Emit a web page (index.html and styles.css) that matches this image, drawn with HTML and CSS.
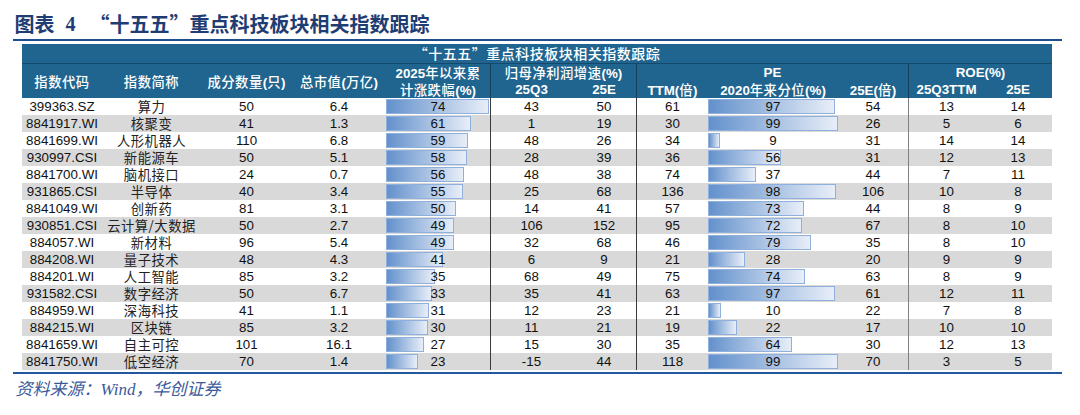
FILE: index.html
```html
<!DOCTYPE html>
<html lang="zh-CN">
<head>
<meta charset="utf-8">
<title>十五五重点科技板块相关指数跟踪</title>
<link rel="stylesheet" href="styles.css">
</head>
<body>
<div class="page">
  <div class="title"><span class="t-cn">图表</span><span class="t-num">4</span><span class="t-text">“十五五”重点科技板块相关指数跟踪</span></div>
  <div class="tbl">
    <div class="h1">“十五五”重点科技板块相关指数跟踪</div>
    <div class="h2">
      <div class="hc span2 c1"><span class="k">指数代码</span></div>
      <div class="hc span2 c2"><span class="k">指数简称</span></div>
      <div class="hc span2 c3"><span class="k">成分数量</span>(<span class="k">只</span>)</div>
      <div class="hc span2 c4"><span class="k">总市值</span>(<span class="k">万亿</span>)</div>
      <div class="hc ra c5">2025<span class="k">年以来累</span></div>
      <div class="hc ra g6 sep"><span class="k">归母净利润增速</span>(%)</div>
      <div class="hc ra g8 sep">PE</div>
      <div class="hc ra g11 sep2">ROE(%)</div>
      <div class="hc rb c5"><span class="k">计涨跌幅</span>(%)</div>
      <div class="hc rb c6 sep">25Q3</div>
      <div class="hc rb c7">25E</div>
      <div class="hc rb c8 sep">TTM(<span class="k">倍</span>)</div>
      <div class="hc rb c9">2020<span class="k">年来分位</span>(%)</div>
      <div class="hc rb c10">25E(<span class="k">倍</span>)</div>
      <div class="hc rb c11 sep2">25Q3TTM</div>
      <div class="hc rb c12">25E</div>
    </div>
    <div class="body">
      <div class="r"><div>399363.SZ</div><div class="cn">算力</div><div>50</div><div>6.4</div><div class="b"><i class="bar" style="width:103px"></i><span>74</span></div><div class="sep">43</div><div>50</div><div class="sep">61</div><div class="b"><i class="bar" style="width:126.9px"></i><span>97</span></div><div>54</div><div class="sep2">13</div><div>14</div></div>
      <div class="r g"><div>8841917.WI</div><div class="cn">核聚变</div><div>41</div><div>1.3</div><div class="b"><i class="bar" style="width:85.1px"></i><span>61</span></div><div class="sep">1</div><div>19</div><div class="sep">30</div><div class="b"><i class="bar" style="width:129.5px"></i><span>99</span></div><div>26</div><div class="sep2">5</div><div>6</div></div>
      <div class="r"><div>8841699.WI</div><div class="cn">人形机器人</div><div>110</div><div>6.8</div><div class="b"><i class="bar" style="width:82.3px"></i><span>59</span></div><div class="sep">48</div><div>26</div><div class="sep">34</div><div class="b"><i class="bar" style="width:11.8px"></i><span>9</span></div><div>31</div><div class="sep2">14</div><div>14</div></div>
      <div class="r g"><div>930997.CSI</div><div class="cn">新能源车</div><div>50</div><div>5.1</div><div class="b"><i class="bar" style="width:80.9px"></i><span>58</span></div><div class="sep">28</div><div>39</div><div class="sep">36</div><div class="b"><i class="bar" style="width:73.2px"></i><span>56</span></div><div>31</div><div class="sep2">12</div><div>13</div></div>
      <div class="r"><div>8841700.WI</div><div class="cn">脑机接口</div><div>24</div><div>0.7</div><div class="b"><i class="bar" style="width:78.1px"></i><span>56</span></div><div class="sep">48</div><div>38</div><div class="sep">74</div><div class="b"><i class="bar" style="width:48.4px"></i><span>37</span></div><div>44</div><div class="sep2">7</div><div>11</div></div>
      <div class="r g"><div>931865.CSI</div><div class="cn">半导体</div><div>40</div><div>3.4</div><div class="b"><i class="bar" style="width:76.7px"></i><span>55</span></div><div class="sep">25</div><div>68</div><div class="sep">136</div><div class="b"><i class="bar" style="width:128.2px"></i><span>98</span></div><div>106</div><div class="sep2">10</div><div>8</div></div>
      <div class="r"><div>8841049.WI</div><div class="cn">创新药</div><div>81</div><div>3.1</div><div class="b"><i class="bar" style="width:69.8px"></i><span>50</span></div><div class="sep">14</div><div>41</div><div class="sep">57</div><div class="b"><i class="bar" style="width:95.5px"></i><span>73</span></div><div>44</div><div class="sep2">8</div><div>9</div></div>
      <div class="r g"><div>930851.CSI</div><div class="cn">云计算/大数据</div><div>50</div><div>2.7</div><div class="b"><i class="bar" style="width:68.4px"></i><span>49</span></div><div class="sep">106</div><div>152</div><div class="sep">95</div><div class="b"><i class="bar" style="width:94.2px"></i><span>72</span></div><div>67</div><div class="sep2">8</div><div>10</div></div>
      <div class="r"><div>884057.WI</div><div class="cn">新材料</div><div>96</div><div>5.4</div><div class="b"><i class="bar" style="width:68.4px"></i><span>49</span></div><div class="sep">32</div><div>68</div><div class="sep">46</div><div class="b"><i class="bar" style="width:103.3px"></i><span>79</span></div><div>35</div><div class="sep2">8</div><div>10</div></div>
      <div class="r g"><div>884208.WI</div><div class="cn">量子技术</div><div>48</div><div>4.3</div><div class="b"><i class="bar" style="width:57.2px"></i><span>41</span></div><div class="sep">6</div><div>9</div><div class="sep">21</div><div class="b"><i class="bar" style="width:36.6px"></i><span>28</span></div><div>20</div><div class="sep2">9</div><div>9</div></div>
      <div class="r"><div>884201.WI</div><div class="cn">人工智能</div><div>85</div><div>3.2</div><div class="b"><i class="bar" style="width:48.8px"></i><span>35</span></div><div class="sep">68</div><div>49</div><div class="sep">75</div><div class="b"><i class="bar" style="width:96.8px"></i><span>74</span></div><div>63</div><div class="sep2">8</div><div>9</div></div>
      <div class="r g"><div>931582.CSI</div><div class="cn">数字经济</div><div>50</div><div>6.7</div><div class="b"><i class="bar" style="width:46px"></i><span>33</span></div><div class="sep">35</div><div>41</div><div class="sep">63</div><div class="b"><i class="bar" style="width:126.9px"></i><span>97</span></div><div>61</div><div class="sep2">12</div><div>11</div></div>
      <div class="r"><div>884959.WI</div><div class="cn">深海科技</div><div>41</div><div>1.1</div><div class="b"><i class="bar" style="width:43.2px"></i><span>31</span></div><div class="sep">12</div><div>23</div><div class="sep">21</div><div class="b"><i class="bar" style="width:13.1px"></i><span>10</span></div><div>22</div><div class="sep2">7</div><div>8</div></div>
      <div class="r g"><div>884215.WI</div><div class="cn">区块链</div><div>85</div><div>3.2</div><div class="b"><i class="bar" style="width:41.9px"></i><span>30</span></div><div class="sep">11</div><div>21</div><div class="sep">19</div><div class="b"><i class="bar" style="width:28.8px"></i><span>22</span></div><div>17</div><div class="sep2">10</div><div>10</div></div>
      <div class="r"><div>8841659.WI</div><div class="cn">自主可控</div><div>101</div><div>16.1</div><div class="b"><i class="bar" style="width:37.7px"></i><span>27</span></div><div class="sep">15</div><div>30</div><div class="sep">35</div><div class="b"><i class="bar" style="width:83.7px"></i><span>64</span></div><div>30</div><div class="sep2">12</div><div>13</div></div>
      <div class="r g"><div>8841750.WI</div><div class="cn">低空经济</div><div>70</div><div>1.4</div><div class="b"><i class="bar" style="width:32.1px"></i><span>23</span></div><div class="sep">-15</div><div>44</div><div class="sep">118</div><div class="b"><i class="bar" style="width:129.5px"></i><span>99</span></div><div>70</div><div class="sep2">3</div><div>5</div></div>
    </div>
  </div>
  <div class="rule"></div>
  <div class="foot">资料来源：Wind，华创证券</div>
</div>
</body>
</html>
```

FILE: styles.css
```css
* { box-sizing: border-box; }

body {
  margin: 0;
  background: #fff;
  font-family: "Liberation Sans", "Noto Sans CJK SC", sans-serif;
}

.page {
  margin-left: 13px;
  width: 1049px;
}

.title {
  display: flex;
  align-items: center;
  padding: 12px 0 3px 1.5px;
  border-bottom: 2px solid #1f4e8c;
  font-size: 20px;
  line-height: 24px;
  color: #1f3d73;
  font-weight: bold;
}

.t-cn {
  font-family: "Noto Sans CJK SC", sans-serif;
}

.t-num {
  font-family: "Liberation Serif", serif;
  margin-left: 11px;
}

.t-text {
  font-family: "Noto Sans CJK SC", sans-serif;
  margin-left: 14px;
}

.tbl {
  margin: 3px 0 0 9px;
  width: 1030px;
}

.h1 {
  height: 20px;
  background: #1f6590;
  border-bottom: 1px solid #15496b;
  color: #fff;
  text-align: center;
  font-family: "Noto Sans CJK SC", sans-serif;
  font-size: 14px;
  line-height: 19px;
  letter-spacing: 0.5px;
  font-weight: 500;
}

.h2,
.r {
  display: grid;
  grid-template-columns: 80px 99px 91px 94px 104px 82px 64px 72px 130px 70px 76px 68px;
}

.h2 {
  grid-template-rows: 18px 16px;
  background: #1f6590;
  color: #fff;
  font-weight: bold;
  font-size: 13.33px;
}

.hc {
  text-align: center;
  white-space: nowrap;
}

.hc .k {
  font-family: "Noto Sans CJK SC", sans-serif;
  font-weight: 500;
  letter-spacing: 0.5px;
}

.span2 {
  grid-row: 1 / 3;
  line-height: 36px;
}

.c1 { grid-column: 1; }
.c2 { grid-column: 2; }
.c3 { grid-column: 3; }
.c4 { grid-column: 4; }
.c5 { grid-column: 5; }
.c6 { grid-column: 6; }
.c7 { grid-column: 7; }
.c8 { grid-column: 8; }
.c9 { grid-column: 9; }
.c10 { grid-column: 10; }
.c11 { grid-column: 11; }
.c12 { grid-column: 12; }
.g6 { grid-column: 6 / 8; }
.g8 { grid-column: 8 / 11; }
.g11 { grid-column: 11 / 13; }

.ra {
  grid-row: 1;
  line-height: 18px;
}

.rb {
  grid-row: 2;
  line-height: 16px;
}

.h2 .sep,
.h2 .sep2 {
  border-left: 1px solid #173f5c;
}

.r {
  height: 17px;
  font-size: 13.33px;
  line-height: 17px;
  color: #111;
  background: #fff;
}

.r.g {
  background: #d9d9d9;
}

.r > div {
  text-align: center;
  white-space: nowrap;
}

.r .cn {
  font-family: "Noto Sans CJK SC", sans-serif;
  letter-spacing: 0.5px;
  color: #222;
}

.r .sep {
  border-left: 1px solid #3a3a3a;
}

.r .sep2 {
  border-left: 1px solid #808080;
}

.b {
  position: relative;
}

.bar {
  position: absolute;
  left: 0;
  top: 1px;
  bottom: 1px;
  background: linear-gradient(90deg, #6391cc, #e8eef8);
  border: 1px solid #8fb0dc;
}

.b span {
  position: relative;
}

.rule {
  margin-top: 2px;
  border-top: 2px solid #24579c;
}

.foot {
  margin-top: 6px;
  padding-left: 2.5px;
  font-family: "Liberation Serif", "Noto Sans CJK SC", serif;
  font-size: 17px;
  line-height: 20px;
  font-style: italic;
  color: #3a5a9b;
}
```
